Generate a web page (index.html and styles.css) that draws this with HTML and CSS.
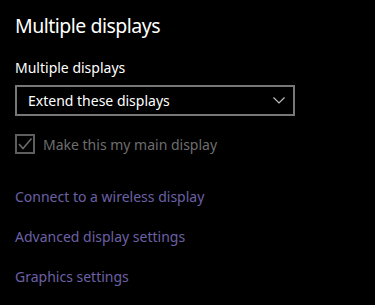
FILE: index.html
```html
<!DOCTYPE html>
<html lang="en">
<head>
    <meta charset="UTF-8">
    <title>Multiple displays</title>
    <link rel="stylesheet" href="styles.css">
</head>
<body>
    <main class="panel">
        <h1 class="title">Multiple displays</h1>

        <div class="field">
            <label class="field-label" for="displayMode">Multiple displays</label>
            <div class="dropdown" id="displayMode">
                <span>Extend these displays</span>
                <svg class="chevron" width="12" height="7" viewBox="0 0 12 7">
                    <path d="M0.5 0.5 L6 6 L11.5 0.5" fill="none" stroke="#bdbdbd" stroke-width="1.2"/>
                </svg>
            </div>
        </div>

        <div class="check">
            <span class="check-box">
                <svg width="16" height="16" viewBox="0 0 16 16">
                    <path d="M2 8 L6 12.5 L14.5 2.5" fill="none" stroke="#6a6a6a" stroke-width="1.6"/>
                </svg>
            </span>
            <span class="check-text">Make this my main display</span>
        </div>

        <!-- links -->
        <div class="links">
            <a href="#">Connect to a wireless display</a>
            <a href="#">Advanced display settings</a>
            <a href="#">Graphics settings</a>
        </div>
    </main>
</body>
</html>
```

FILE: styles.css
```css
body {
    margin: 0;
    background-color: #000;
    color: #fff;
    font-family: "Noto Sans", "Open Sans", sans-serif;
}
.panel {
    padding: 12px 15px 0 15px;
}
.title {
    margin: 0;
    font-size: 19.5px;
    font-weight: 400;
    letter-spacing: -0.5px;
    line-height: 28px;
}
.field {
    margin-top: 18px;
}
.field-label {
    display: block;
    font-size: 14px;
    line-height: 20px;
}
.dropdown {
    margin-top: 7px;
    width: 265px;
    height: 27px;
    border: 2px solid #777;
    display: flex;
    align-items: center;
    justify-content: space-between;
    padding: 0 0 0 11px;
    box-sizing: content-box;
    font-size: 14px;
}
.chevron {
    margin-right: 8px;
}
.check {
    margin-top: 18px;
    display: flex;
    align-items: center;
    gap: 8px;
}
.check-box {
    width: 16px;
    height: 16px;
    border: 2px solid #5e5e5e;
    display: flex;
}
.check-text {
    color: #6e6e6e;
    font-size: 14px;
}
.links {
    margin-top: 32px;
    display: flex;
    flex-direction: column;
    gap: 19px;
}
.links a {
    color: #6c60a6;
    text-decoration: none;
    font-size: 14px;
    line-height: 21px;
}
```
